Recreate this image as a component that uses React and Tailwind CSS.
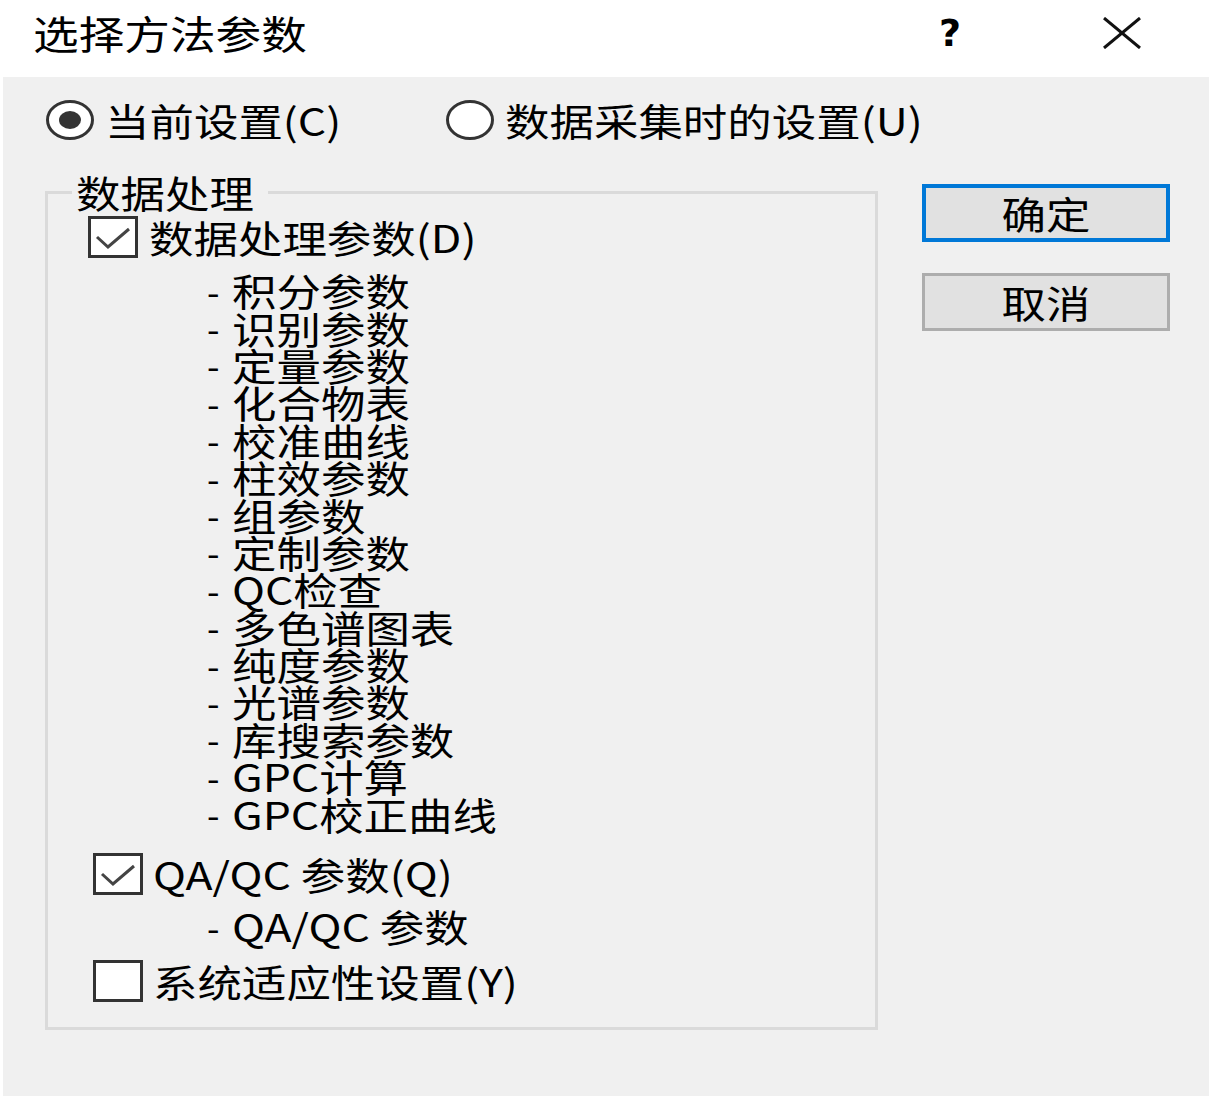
import React from 'react';

const font = { fontFamily: '"Noto Sans CJK SC", "Noto Sans", sans-serif' };

// the dialog text is stretched sideways in the screenshot
function Txt({ children, center }) {
  return (
    <span
      className={`inline-block whitespace-nowrap scale-x-[1.17] ${center ? 'origin-center' : 'origin-left'}`}
    >
      {children}
    </span>
  );
}

function Radio({ checked }) {
  return (
    <svg width="50" height="42" viewBox="0 0 50 42" className="shrink-0">
      <ellipse cx="25" cy="21" rx="22.5" ry="18.5" fill="#fff" stroke="#333" strokeWidth="3" />
      {checked && <ellipse cx="25" cy="21" rx="11" ry="9" fill="#333" />}
    </svg>
  );
}

function Checkbox({ checked }) {
  return (
    <svg width="50" height="42" viewBox="0 0 50 42" className="shrink-0">
      <rect x="1.5" y="1.5" width="47" height="39" fill="#fff" stroke="#333" strokeWidth="3" />
      {checked && (
        <polyline points="9,21 20,31 41,13" fill="none" stroke="#444" strokeWidth="3" />
      )}
    </svg>
  );
}

function SubItem({ children }) {
  return (
    <div className="flex items-center h-[37.4px] ml-[159px]">
      <span className="w-[25px] text-[36px] leading-none text-black">-</span>
      <span className="text-[38px] leading-[37px] text-black">
        <Txt>{children}</Txt>
      </span>
    </div>
  );
}

const dataItems = [
  '积分参数',
  '识别参数',
  '定量参数',
  '化合物表',
  '校准曲线',
  '柱效参数',
  '组参数',
  '定制参数',
  'QC检查',
  '多色谱图表',
  '纯度参数',
  '光谱参数',
  '库搜索参数',
  'GPC计算',
  'GPC校正曲线',
];

export default function App() {
  return (
    <div className="w-[1209px] h-[1096px] bg-white overflow-hidden flex flex-col text-black" style={font}>
      {/* title bar */}
      <div className="h-[77px] shrink-0 flex items-center pb-[12px]">
        <span className="ml-[33px] text-[39px] leading-none">
          <Txt>选择方法参数</Txt>
        </span>
        <span className="ml-auto text-[38px] font-bold leading-none" style={{ fontFamily: '"DejaVu Sans", sans-serif' }}>?</span>
        <svg width="40" height="32" viewBox="0 0 40 32" className="ml-[141px] mr-[67px]">
          <line x1="2" y1="1" x2="38" y2="31" stroke="#111" strokeWidth="3" />
          <line x1="38" y1="1" x2="2" y2="31" stroke="#111" strokeWidth="3" />
        </svg>
      </div>

      {/* body */}
      <div className="flex-1 ml-[3px] bg-[#f0f0f0] pl-[42px] pt-[22px]">
        <div className="flex items-center h-[42px] text-[38px] leading-none">
          <div className="w-[400px] flex items-center gap-[10px]">
            <Radio checked />
            <Txt>当前设置(C)</Txt>
          </div>
          <div className="flex items-center gap-[10px]">
            <Radio />
            <Txt>数据采集时的设置(U)</Txt>
          </div>
        </div>

        <div className="flex items-start mt-[31px]">
          <fieldset className="w-[833px] h-[858px] border-[3px] border-[#dadada] text-[38px]">
            <legend className="ml-[24px] w-[196px] pl-[4px] leading-[40px]">
              <Txt>数据处理</Txt>
            </legend>

            <div className="flex items-center h-[44px] mt-[3px] ml-[40px] gap-[11px] leading-none">
              <Checkbox checked />
              <Txt>数据处理参数(D)</Txt>
            </div>

            <div className="mt-[12px] flex flex-col">
              {dataItems.map((item) => (
                <SubItem key={item}>{item}</SubItem>
              ))}
            </div>

            <div className="flex items-center h-[44px] mt-[20px] ml-[45px] gap-[10px] leading-none">
              <Checkbox checked />
              <Txt>QA/QC 参数(Q)</Txt>
            </div>
            <div className="mt-[11px]">
              <SubItem>QA/QC 参数</SubItem>
            </div>
            <div className="flex items-center h-[44px] mt-[15px] ml-[45px] gap-[10px] leading-none">
              <Checkbox />
              <Txt>系统适应性设置(Y)</Txt>
            </div>
          </fieldset>

          <div className="ml-[44px] mt-[12px] flex flex-col gap-[31px] text-[38px] leading-none">
            <button className="w-[248px] h-[58px] bg-[#e1e1e1] border-[4px] border-[#0078d7] flex items-center justify-center">
              <Txt center>确定</Txt>
            </button>
            <button className="w-[248px] h-[58px] bg-[#e1e1e1] border-[3px] border-[#adadad] flex items-center justify-center">
              <Txt center>取消</Txt>
            </button>
          </div>
        </div>
      </div>
    </div>
  );
}
